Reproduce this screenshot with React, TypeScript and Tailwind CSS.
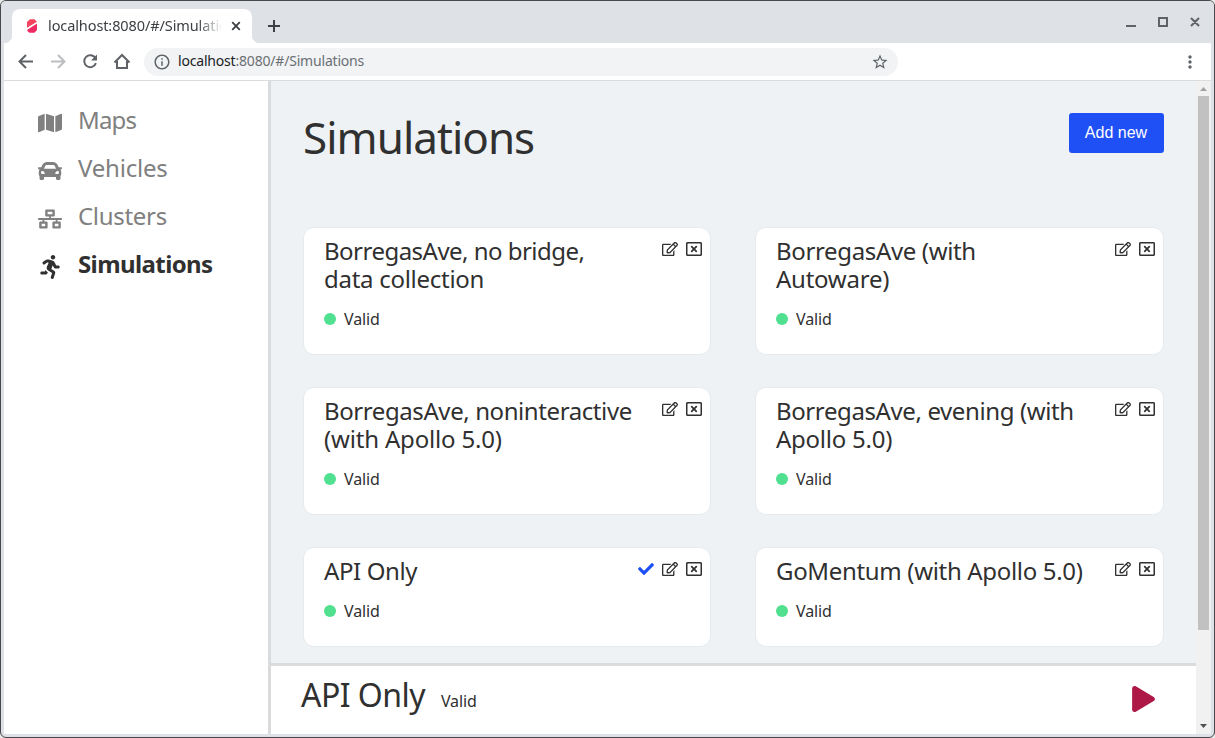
import { FaMap, FaCar, FaNetworkWired, FaRunning, FaRegEdit, FaRegWindowClose, FaCheck, FaPlay } from 'react-icons/fa';
import { MdInfoOutline, MdStarBorder, MdMoreVert } from 'react-icons/md';

const nav = [
  { label: 'Maps', Icon: FaMap, text: 'ml-4 text-[24px] leading-8 tracking-[-0.85px]', active: false },
  { label: 'Vehicles', Icon: FaCar, text: 'ml-4 text-[24px] leading-8 tracking-[-0.2px]', active: false },
  { label: 'Clusters', Icon: FaNetworkWired, text: 'ml-4 text-[24px] leading-8 tracking-[-0.3px]', active: false },
  { label: 'Simulations', Icon: FaRunning, text: 'ml-4 text-[24px] leading-8 tracking-[-0.6px]', active: true },
];

type Line = { text: string; spacing: string };

const cards: { lines: Line[]; selected: boolean }[] = [
  { lines: [{ text: 'BorregasAve, no bridge,', spacing: 'tracking-[-0.52px]' }, { text: 'data collection', spacing: 'tracking-[-0.28px]' }], selected: false },
  { lines: [{ text: 'BorregasAve (with', spacing: 'tracking-[-0.35px]' }, { text: 'Autoware)', spacing: 'tracking-[-0.25px]' }], selected: false },
  { lines: [{ text: 'BorregasAve, noninteractive', spacing: 'tracking-[-0.41px]' }, { text: '(with Apollo 5.0)', spacing: 'tracking-[-0.18px]' }], selected: false },
  { lines: [{ text: 'BorregasAve, evening (with', spacing: 'tracking-[-0.39px]' }, { text: 'Apollo 5.0)', spacing: 'tracking-[-0.25px]' }], selected: false },
  { lines: [{ text: 'API Only', spacing: 'tracking-[-0.4px]' }], selected: true },
  { lines: [{ text: 'GoMentum (with Apollo 5.0)', spacing: 'tracking-[-0.33px]' }], selected: false },
];

function TabStrip() {
  return (
    <div className="flex h-[42px] shrink-0 items-end bg-[#dee1e6] pl-[11px] pr-[11px]">
      <div className="relative flex h-[34px] w-[240px] items-center rounded-t-lg bg-white pl-[13px]">
        <svg viewBox="0 0 14 16" className="h-[16px] w-[14px] shrink-0">
          <path d="M5 1.300H9.500L11.500 3.500L2 9.300V4Z" fill="#f4435f" />
          <path d="M2.300 11.800L12 5.500V12L9.500 14.800H4.500L2.300 13Z" fill="#ee2a63" />
          <path d="M2 9.300L11.500 3.500" stroke="#f4435f" strokeWidth="1" />
          <path d="M2.300 10.600L12 4.600" stroke="white" strokeWidth=".7" />
        </svg>
        <span className="ml-[9px] w-[174px] overflow-hidden whitespace-nowrap pb-[2px] text-[14.5px] leading-5 tracking-[-0.1px] text-[#3c4043] [mask-image:linear-gradient(to_right,black_150px,transparent_174px)]">localhost:8080/#/Simulations</span>
        <svg viewBox="0 0 14 14" className="ml-[7px] h-[14px] w-[14px] shrink-0" stroke="#3c4043" strokeWidth="1.800">
          <path d="M3.200 3.200L10.800 10.800M10.800 3.200L3.200 10.800" />
        </svg>
        <span className="absolute -left-2 bottom-0 h-2 w-2 bg-[radial-gradient(circle_at_0_0,transparent_8px,white_8.500px)]" />
        <span className="absolute -right-2 bottom-0 h-2 w-2 bg-[radial-gradient(circle_at_100%_0,transparent_8px,white_8.500px)]" />
      </div>
      <svg viewBox="0 0 20 20" className="mb-[7px] ml-[12px] h-5 w-5" stroke="#3c4043" strokeWidth="2">
        <path d="M4 10H16M10 4V16" />
      </svg>
      <svg viewBox="0 0 76 14" className="mb-[14px] ml-auto mr-[1px] h-[14px] w-[76px]" fill="none" stroke="#5f6368" strokeWidth="2">
        <path d="M0 11H10M33 3H41V11H33ZM65 3L73 11M73 3L65 11" />
      </svg>
    </div>
  );
}

function Toolbar() {
  return (
    <div className="flex h-[38px] shrink-0 items-center border-b border-[#dadce0] bg-white pl-[12px] pr-[11px] text-[#5f6368]">
      <svg viewBox="0 0 20 20" className="h-5 w-5" fill="none" stroke="currentColor" strokeWidth="2">
        <path d="M17 9.500H4.500M10 3L3.500 9.500L10 16" />
      </svg>
      <svg viewBox="0 0 20 20" className="ml-3 h-5 w-5 text-[#bcbec0]" fill="none" stroke="currentColor" strokeWidth="2">
        <path d="M3 9.500H15.500M10 3L16.500 9.500L10 16" />
      </svg>
      <svg viewBox="0 0 20 20" className="ml-3 h-5 w-5" fill="none" stroke="currentColor" strokeWidth="2">
        <path d="M15.400 6.100A6 6 0 1 0 15.900 11.200" />
        <path d="M17 2.500V8.500H11Z" fill="currentColor" stroke="none" />
      </svg>
      <svg viewBox="0 0 20 20" className="ml-3 h-5 w-5" fill="none" stroke="currentColor" strokeWidth="2">
        <path d="M2.500 10.500L10 3L17.500 10.500M5 9V16H15V9" />
      </svg>
      <div className="ml-3 flex h-7 w-[754px] items-center rounded-full bg-[#f1f3f4] pl-[9px] pr-[9px]">
        <MdInfoOutline className="h-[18px] w-[18px]" />
        <span className="ml-[7px] pb-[2px] text-[14px] leading-5 tracking-[-0.19px] text-[#6b6f74]"><span className="text-[#202124]">localhost</span>:8080/#/Simulations</span>
        <MdStarBorder className="ml-auto h-[18px] w-[18px]" />
      </div>
      <MdMoreVert className="ml-auto h-5 w-5" />
    </div>
  );
}

function Card({ lines, selected }: { lines: Line[]; selected: boolean }) {
  return (
    <div className="flex flex-col rounded-[11px] border border-[#e5eaee] bg-white pb-[22px] pl-[20px] pr-[8px] pt-[9px]">
      <div className="flex items-start justify-between">
        <h2 className="whitespace-nowrap text-[24px] leading-[28px]">
          {lines.map(({ text, spacing }) => <span key={text} className={`block ${spacing}`}>{text}</span>)}
        </h2>
        <div className="mt-[4px] flex gap-2">
          {selected && <FaCheck className="h-4 w-4 text-[#1d4ff5]" />}
          <FaRegEdit className="h-4 w-4" />
          <FaRegWindowClose className="h-4 w-4" />
        </div>
      </div>
      <div className="mt-[14px] flex h-6 items-center text-[16px] tracking-[-0.1px]">
        <span className="mr-2 h-3 w-3 rounded-full bg-[#50e090]" />Valid
      </div>
    </div>
  );
}

export default function App() {
  return (
    <div className="h-[738px] w-[1215px] bg-[#e8e8e8] font-['Noto_Sans',sans-serif] text-[#303030]">
      <div className="flex h-full flex-col overflow-hidden rounded-[6px] border border-[#48484c] bg-[#dee1e6]">
        <TabStrip />
        <div className="mx-[3px] mb-[3px] flex min-h-0 grow flex-col">
          <Toolbar />
          <div className="flex min-h-0 grow">
            <nav className="w-[267px] shrink-0 border-r-[3px] border-[#dadbdd] bg-white pl-[34px] pt-[16px]">
              {nav.map(({ label, Icon, text, active }) => (
                <div key={label} className={active ? 'flex h-12 items-center font-bold text-[#303030]' : 'flex h-12 items-center text-[#808080]'}>
                  <Icon className="mt-[3px] h-6 w-6" />
                  <span className="-mt-0.5 flex"><span className={text}>{label}</span></span>
                </div>
              ))}
            </nav>
            <main className="flex min-w-0 grow flex-col bg-[#eef2f5]">
              <div className="flex h-[582px] shrink-0 flex-col pl-[32px] pr-[32px]">
                <header className="flex h-[146px] shrink-0 items-start justify-between pt-[32px]">
                  <h1 className="-mt-[2px] text-[44px] leading-[52px] tracking-[-0.98px]">Simulations</h1>
                  <button className="h-10 w-[95px] rounded-[3px] bg-[#1f50f5] pr-px font-['Liberation_Sans',sans-serif] text-[16px] text-white">Add new</button>
                </header>
                <div className="grid grid-cols-[408px_409px] grid-rows-[128px_128px_100px] justify-between gap-y-8">
                  {cards.map((card) => <Card key={card.lines[0].text} {...card} />)}
                </div>
              </div>
              <footer className="flex grow items-center border-t-[3px] border-[#dadbdd] bg-white pl-[30px] pr-[41px]">
                <div className="flex items-baseline pb-[11px]">
                  <span className="text-[32px] leading-10 tracking-[-0.55px]">API Only</span>
                  <span className="ml-4 text-[16px] tracking-[-0.1px]">Valid</span>
                </div>
                <FaPlay className="mb-[3px] ml-auto h-[26px] w-[23px] text-[#ad1846]" />
              </footer>
            </main>
            <div className="flex w-[15px] shrink-0 flex-col items-center bg-[#f1f1f1]">
              <svg viewBox="0 0 15 15" className="h-[15px] w-[15px]"><path d="M4 10H11L7.500 6Z" fill="#a3a3a3" /></svg>
              <div className="h-[534px] w-[11px] bg-[#c1c1c1]" />
              <svg viewBox="0 0 15 15" className="mt-auto h-[15px] w-[15px]"><path d="M4 5H11L7.500 9Z" fill="#505050" /></svg>
            </div>
          </div>
        </div>
      </div>
    </div>
  );
}
